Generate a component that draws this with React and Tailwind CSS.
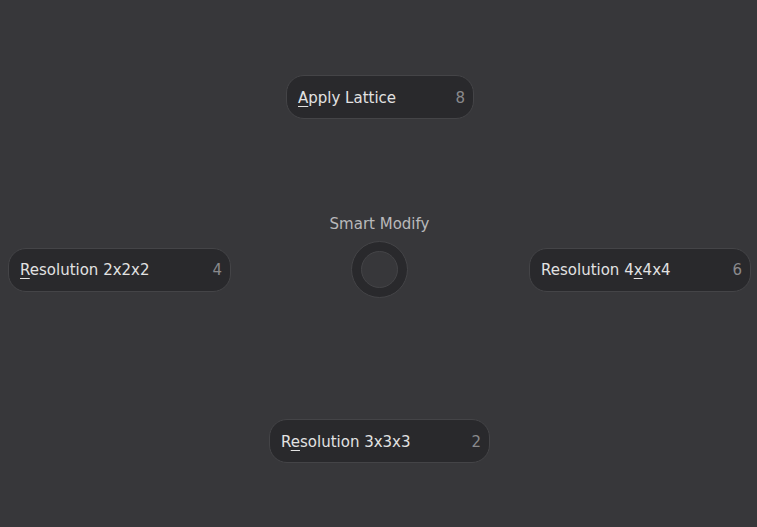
import React from 'react'

const PieItem = ({ label, underlineAt, num, className = '' }) => {
  const before = label.slice(0, underlineAt)
  const letter = label.slice(underlineAt, underlineAt + 1)
  const after = label.slice(underlineAt + 1)
  return (
    <div className={`h-[44px] flex items-center justify-between pl-[11px] pr-[8px] pt-[2px] rounded-[18px] border border-[#444447] bg-[#29292c] ${className}`}>
      <span className="text-[15px] text-[#e2e2e2] whitespace-nowrap">
        {before}
        <span className="underline decoration-1 underline-offset-[3px]">{letter}</span>
        {after}
      </span>
      <span className="text-[15px] text-[#8a8a8c]">{num}</span>
    </div>
  )
}

export default function App() {
  return (
    <div
      className="w-[757px] h-[527px] bg-[#37373a] flex flex-col items-start pt-[75px]"
      style={{ fontFamily: '"DejaVu Sans", sans-serif' }}
    >
      <PieItem label="Apply Lattice" underlineAt={0} num="8" className="w-[188px] ml-[286px]" />

      <div className="mt-[122px] ml-[8px] flex items-center">
        <PieItem label="Resolution 2x2x2" underlineAt={0} num="4" className="w-[223px]" />
        <div className="relative ml-[120px] mr-[121px]">
          <div className="absolute bottom-full mb-[6px] left-1/2 -translate-x-1/2 whitespace-nowrap text-[15px] text-[#b9b9bb]">
            Smart Modify
          </div>
          <div className="w-[57px] h-[57px] rounded-full border border-[#444447] bg-[#29292c] flex items-center justify-center">
            <div className="w-[37px] h-[37px] rounded-full border border-[#444447] bg-[#37373a]" />
          </div>
        </div>
        <PieItem label="Resolution 4x4x4" underlineAt={12} num="6" className="w-[222px]" />
      </div>

      <PieItem label="Resolution 3x3x3" underlineAt={1} num="2" className="w-[221px] ml-[269px] mt-[121px]" />
    </div>
  )
}
